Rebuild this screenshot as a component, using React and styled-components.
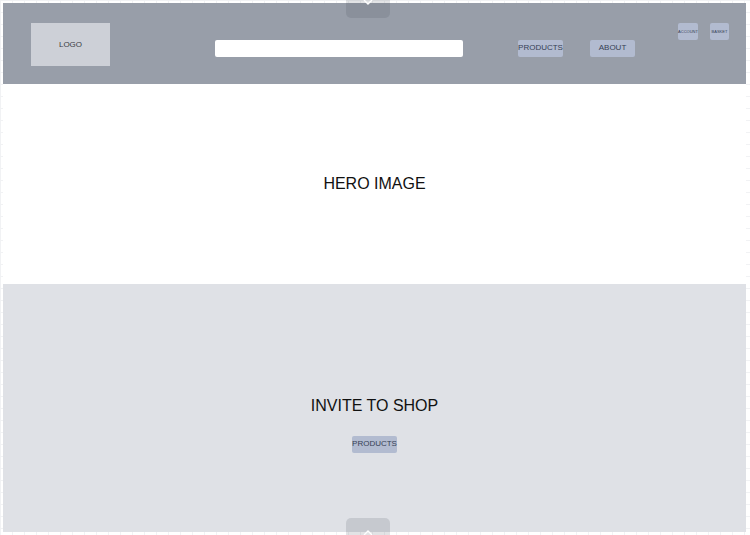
import styled, { createGlobalStyle } from 'styled-components';

const Global = createGlobalStyle`
    body {
        margin:0;
        font-family:"Liberation Sans", Arial, sans-serif;
        background-color:#fff;
        background-image:
            linear-gradient(to right, #f1f2f4 1px, transparent 1px),
            linear-gradient(to bottom, #f1f2f4 1px, transparent 1px);
        background-size:12px 12px;
        width:750px;
        height:535px;
        overflow:hidden;
    }
`;

const Chevron = ({ up }) => (
    <svg width="10" height="5" viewBox="0 0 10 5">
        <path d={up ? 'M1 5 L5 1 L9 5' : 'M1 0 L5 4 L9 0'} fill="none" stroke="#fff" strokeWidth="1.4" />
    </svg>
);

const App = () => {
    return (
        <Canvas>
            <Global />
            <Frame>
                <Header>
                    <Logo>LOGO</Logo>
                    <Search type="text" />
                    <NavButton $gap={55}>PRODUCTS</NavButton>
                    <NavButton $gap={27}>ABOUT</NavButton>
                    <IconButton $gap={43} $w={20}>ACCOUNT</IconButton>
                    <IconButton $gap={12} $w={19}>BASKET</IconButton>
                </Header>
                <Hero>HERO IMAGE</Hero>
                <Invite>
                    <InviteTitle>INVITE TO SHOP</InviteTitle>
                    <NavButton $top={21}>PRODUCTS</NavButton>
                </Invite>
            </Frame>
            <Handle $pos="top"><Chevron /></Handle>
            <Handle $pos="bottom"><Chevron up /></Handle>
        </Canvas>
    );
}

export default App;

const Canvas = styled.div`
    position:relative;
    width:750px;
    height:535px;
    padding:3px 4px 3px 3px;
    box-sizing:border-box;
`;

const Frame = styled.div`
    width:743px;
    height:529px;
    display:flex;
    flex-direction:column;
`;

const Header = styled.div`
    height:81px;
    box-sizing:border-box;
    background:#989ea9;
    display:flex;
    align-items:flex-start;
    padding:20px 17px 0 28px;
`;

const Logo = styled.div`
    width:79px;
    height:43px;
    background:#cdd0d7;
    display:flex;
    align-items:center;
    justify-content:center;
    font-size:8px;
    color:#3a3d44;
    padding-bottom:1px;
    box-sizing:border-box;
`;

const Search = styled.input`
    width:248px;
    height:17px;
    box-sizing:border-box;
    margin:17px 0 0 105px;
    border:0;
    border-radius:2px;
    background:#fff;
    outline:none;
`;

const NavButton = styled.div`
    width:45px;
    height:17px;
    margin-top:${p => p.$top || 17}px;
    margin-left:${p => p.$gap || 0}px;
    background:#b2bbd0;
    border-radius:2px;
    display:flex;
    align-items:center;
    justify-content:center;
    font-size:8px;
    color:#363f55;
    padding-bottom:2px;
    box-sizing:border-box;
`;

const IconButton = styled.div`
    width:${p => p.$w}px;
    height:17px;
    margin-left:${p => p.$gap}px;
    background:#b2bbd0;
    border-radius:2px;
    display:flex;
    align-items:center;
    justify-content:center;
    font-size:4px;
    color:#363f55;
`;

const Hero = styled.div`
    height:200px;
    background:#fff;
    display:flex;
    align-items:center;
    justify-content:center;
    font-size:16px;
    color:#111;
`;

const Invite = styled.div`
    height:248px;
    background:#dfe1e6;
    display:flex;
    flex-direction:column;
    align-items:center;
    padding-top:113px;
    box-sizing:border-box;
`;

const InviteTitle = styled.div`
    font-size:16px;
    color:#111;
`;

const Handle = styled.div`
    position:absolute;
    left:346px;
    width:44px;
    background:rgba(60, 66, 78, 0.15);
    display:flex;
    justify-content:center;
    ${p => p.$pos === 'top' ? `
        top:0;
        height:18px;
        align-items:flex-start;
        border-radius:0 0 5px 5px;
    ` : `
        bottom:0;
        height:17px;
        align-items:flex-end;
        border-radius:5px 5px 0 0;
    `}
`;
